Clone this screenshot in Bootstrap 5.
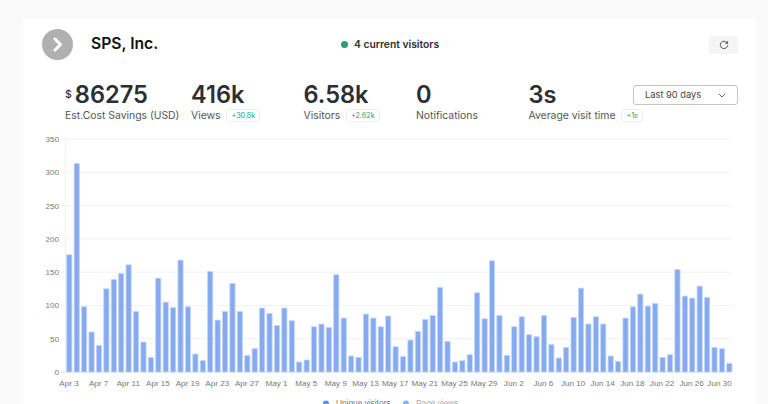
<!doctype html>
<html lang="en"><head><meta charset="utf-8"><title>SPS, Inc.</title>
<link rel="stylesheet" href="https://cdn.jsdelivr.net/npm/bootstrap@5.3.0/dist/css/bootstrap.min.css">
<style>
html,body{height:404px;overflow:hidden}
body{background:#fafafa;font-family:Inter,"Liberation Sans",sans-serif;color:#212529}
.shell{margin:19px 11px 0 23px;background:#fff;height:385px;overflow:hidden;padding:10px 19px 0}
.headrow{height:31px}
.avatar{width:31px;height:31px;background:#b0b0b0}
.sitename{font-size:15.7px;font-weight:600;color:#111;margin:0 0 0 18px;width:250px}
.live{font-size:10.3px;font-weight:600;color:#2b2f33;gap:6px}
.livedot{width:7px;height:7px;background:#2a9d72}
.reload{width:29px;height:18px;background:#f5f5f5;border:0;padding:0;border-radius:3px}
.statrow{margin:20px 0 0 23px;height:41px}
.stat{width:112.5px;flex:none}
.stat-wide{width:126px}
.stat-fill{flex:1 1 0;width:auto;min-width:0}
.statnum{font-size:23.6px;line-height:29px;font-weight:600;color:#2b2f33}
.cur{font-size:10.5px;font-weight:500;vertical-align:5px;margin-right:3px}
.statlabel{font-size:10.4px;line-height:14px;color:#555;white-space:nowrap}
.delta{font-size:7.2px;line-height:11px;color:#2a9d72;border:1px solid #eee;border-radius:3px;padding:0 4px;margin-left:3px;vertical-align:1px;display:inline-block}
.rangebtn{width:105px;height:20px;border:1px solid #c4c4c4;border-radius:3px;background:#fff;font-size:9.3px;color:#444;padding:0 11px;margin-top:5px}
.plot{display:block;margin:10px 0 0 -8px}
.plot text{font-family:"Liberation Sans",sans-serif;font-size:8.1px;fill:#777}
.plot .lg{font-size:8.3px}
</style></head><body>
<main class="shell">
 <div class="headrow d-flex align-items-center">
  <div class="avatar rounded-circle d-flex align-items-center justify-content-center flex-shrink-0">
   <svg width="13" height="15" viewBox="0 0 13 15" fill="none"><path d="M4 2l5.5 5.5L4 13" stroke="#fff" stroke-width="3" stroke-linecap="round" stroke-linejoin="round"/></svg>
  </div>
  <h1 class="sitename">SPS, Inc.</h1>
  <div class="live d-flex align-items-center"><span class="livedot rounded-circle"></span>4 current visitors</div>
  <button class="reload ms-auto d-flex align-items-center justify-content-center" aria-label="Refresh">
   <svg width="10" height="10" viewBox="0 0 10 10" fill="none" stroke="#444" stroke-width=".9"><path d="M8.3 3.2A3.7 3.7 0 1 0 8.7 5.2"/><path d="M8.6 1.1v2.3H6.3"/></svg>
  </button>
 </div>
 <div class="statrow d-flex">
  <div class="stat stat-wide"><div class="statnum"><span class="cur">$</span>86275</div><div class="statlabel">Est.Cost Savings (USD)</div></div>
  <div class="stat"><div class="statnum">416k</div><div class="statlabel">Views <span class="delta">+30.8k</span></div></div>
  <div class="stat"><div class="statnum">6.58k</div><div class="statlabel">Visitors <span class="delta">+2.62k</span></div></div>
  <div class="stat"><div class="statnum">0</div><div class="statlabel">Notifications</div></div>
  <div class="stat stat-fill"><div class="statnum">3s</div><div class="statlabel">Average visit time <span class="delta">+1s</span></div></div>
  <button class="rangebtn d-flex align-items-center justify-content-between flex-shrink-0">Last 90 days
   <svg width="8" height="5" viewBox="0 0 8 5" fill="none" stroke="#555" stroke-width=".9"><path d="M.8.8 4 4l3.2-3.2"/></svg>
  </button>
 </div>
 <svg class="plot" id="plot" width="723" height="280" viewBox="0 0 723 280"></svg>
</main>
<script>
var v=[176,313,98,60,40,125,139,148,161,91,45,22,141,105,97,168,98,27,17,151,78,91,133,91,25,35,96,88,70,96,77,15,18,68,72,67,146,81,24,22,87,81,68,84,38,23,48,61,79,85,127,46,15,17,26,119,80,167,85,25,68,83,56,53,85,41,21,37,82,126,72,83,72,24,16,81,98,117,99,103,22,26,154,114,111,129,112,37,35,13];
var labels=["Apr 3","Apr 7","Apr 11","Apr 15","Apr 19","Apr 23","Apr 27","May 1","May 5","May 9","May 13","May 17","May 21","May 25","May 29","Jun 2","Jun 6","Jun 10","Jun 14","Jun 18","Jun 22","Jun 26","Jun 30"];
var X=function(x){return x-34},Y=function(y){return y-131};
var s='';
[0,50,100,150,200,250,300,350].forEach(function(t){var y=372-t*233/350;
 s+='<line x1="'+X(61)+'" x2="'+X(731)+'" y1="'+Y(y)+'" y2="'+Y(y)+'" stroke="'+(t?'#f1f1f1':'#dcdcdc')+'"/>';
 s+='<text x="'+X(59)+'" y="'+Y(y+3)+'" text-anchor="end">'+t+'</text>';});
s+='<line x1="'+X(65.5)+'" x2="'+X(65.5)+'" y1="'+Y(139)+'" y2="'+Y(372)+'" stroke="#f1f1f1"/>';
v.forEach(function(d,i){var h=d*233/350,x=66.7+i*(664.5/89.6);
 s+='<rect x="'+X(x)+'" y="'+Y(372-h)+'" width="5.2" height="'+h+'" fill="#85aaf0" stroke="#c4d6f9" stroke-width=".8"/>';});
labels.forEach(function(l,i){var cx=69+i*29.65;if(i==22)cx=719.5;
 s+='<text x="'+X(cx)+'" y="'+Y(386)+'" text-anchor="middle">'+l+'</text>';});
s+='<circle cx="'+X(326)+'" cy="'+Y(403.5)+'" r="3" fill="#5f8fe8"/><text class="lg" x="'+X(336)+'" y="'+Y(406)+'">Unique visitors</text>';
s+='<circle cx="'+X(406)+'" cy="'+Y(403.5)+'" r="3" fill="#8aaef2"/><text class="lg" x="'+X(416)+'" y="'+Y(406)+'" style="fill:#aaa">Page views</text>';
document.getElementById('plot').innerHTML=s;
</script>
<script src="https://cdn.jsdelivr.net/npm/bootstrap@5.3.0/dist/js/bootstrap.bundle.min.js"></script>
</body></html>
